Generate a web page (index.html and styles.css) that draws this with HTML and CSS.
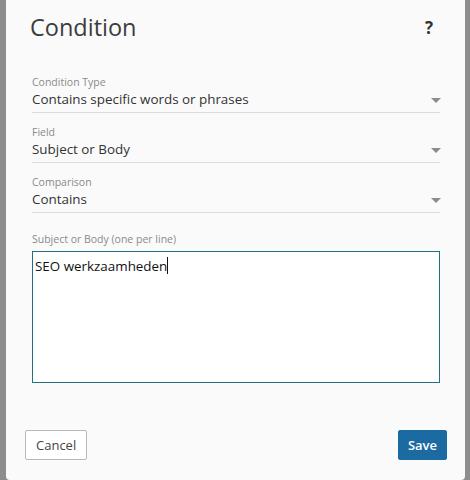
FILE: index.html
```html
<!DOCTYPE html>
<html lang="en">
<head>
    <meta charset="UTF-8">
    <title>Condition</title>
    <link rel="stylesheet" href="styles.css">
</head>
<body>
    <div class="dialog">
        <div class="dialog-header">
            <h1>Condition</h1>
            <span class="help">?</span>
        </div>

        <div class="dialog-body">
            <div class="field">
                <div class="field-label">Condition Type</div>
                <div class="field-select">
                    <span class="field-value">Contains specific words or phrases</span>
                    <svg class="caret" width="10" height="5" viewBox="0 0 10 5"><path d="M0 0h10L5 5z" fill="#8c8c8c"/></svg>
                </div>
            </div>
            <div class="field">
                <div class="field-label">Field</div>
                <div class="field-select">
                    <span class="field-value">Subject or Body</span>
                    <svg class="caret" width="10" height="5" viewBox="0 0 10 5"><path d="M0 0h10L5 5z" fill="#8c8c8c"/></svg>
                </div>
            </div>
            <div class="field">
                <div class="field-label">Comparison</div>
                <div class="field-select">
                    <span class="field-value">Contains</span>
                    <svg class="caret" width="10" height="5" viewBox="0 0 10 5"><path d="M0 0h10L5 5z" fill="#8c8c8c"/></svg>
                </div>
            </div>

            <div class="field-label words-label">Subject or Body (one per line)</div>
            <div class="words-box">SEO werkzaamheden<span class="cursor"></span></div>
        </div>

        <div class="dialog-footer">
            <button class="btn btn-cancel">Cancel</button>
            <button class="btn btn-save">Save</button>
        </div>
    </div>
</body>
</html>
```

FILE: styles.css
```css
html, body {
    margin: 0;
    height: 480px;
}
body {
    background: #8d8d8d;
    padding-left: 6px;
    font-family: "Open Sans", "Noto Sans", sans-serif;
    color: #333;
}
.dialog {
    width: 459px;
    height: 480px;
    box-sizing: border-box;
    background: #fafafa;
    border-radius: 0 0 4px 4px;
    display: flex;
    flex-direction: column;
}
.dialog-header {
    display: flex;
    align-items: center;
    justify-content: space-between;
    padding: 11px 32px 0 24px;
    height: 32px;
}
.dialog-header h1 {
    margin: 0;
    font-size: 23.5px;
    font-weight: 400;
    color: #3c3c3c;
}
.help {
    font-size: 17px;
    font-weight: 700;
    color: #333;
}
.dialog-body {
    padding: 32px 25px 0 26px;
    flex: 1;
}
.field {
    margin-bottom: 12px;
}
.field-label {
    font-size: 10.5px;
    line-height: 14px;
    color: #8a8a8a;
}
.field-select {
    display: flex;
    align-items: center;
    padding-bottom: 3px;
    border-bottom: 1px solid #dcdcdc;
}
.field-value {
    flex: 1;
    font-size: 13.4px;
    line-height: 20px;
    color: #333;
}
.caret {
    margin-right: -1px;
    margin-top: 2px;
}
.words-label {
    margin-top: 19px;
    margin-bottom: 5px;
}
.words-box {
    height: 132px;
    box-sizing: border-box;
    border: 1px solid #23707f;
    background: #fff;
    padding: 4px 2px;
    font-size: 13.4px;
    line-height: 20px;
    color: #111;
}
.cursor {
    display: inline-block;
    width: 1px;
    height: 17px;
    background: #111;
    vertical-align: -3px;
}
.dialog-footer {
    display: flex;
    justify-content: space-between;
    padding: 0 18px 20px 19px;
}
.btn {
    height: 30px;
    font-family: inherit;
    font-size: 13px;
    border-radius: 2px;
    padding: 0 10px;
    cursor: pointer;
}
.btn-cancel {
    background: #fff;
    color: #444;
    border: 1px solid #b9b9b9;
}
.btn-save {
    background: #1b6aa2;
    color: #fff;
    border: 1px solid #1b6aa2;
    font-weight: 600;
    padding: 0 9px;
}
```
